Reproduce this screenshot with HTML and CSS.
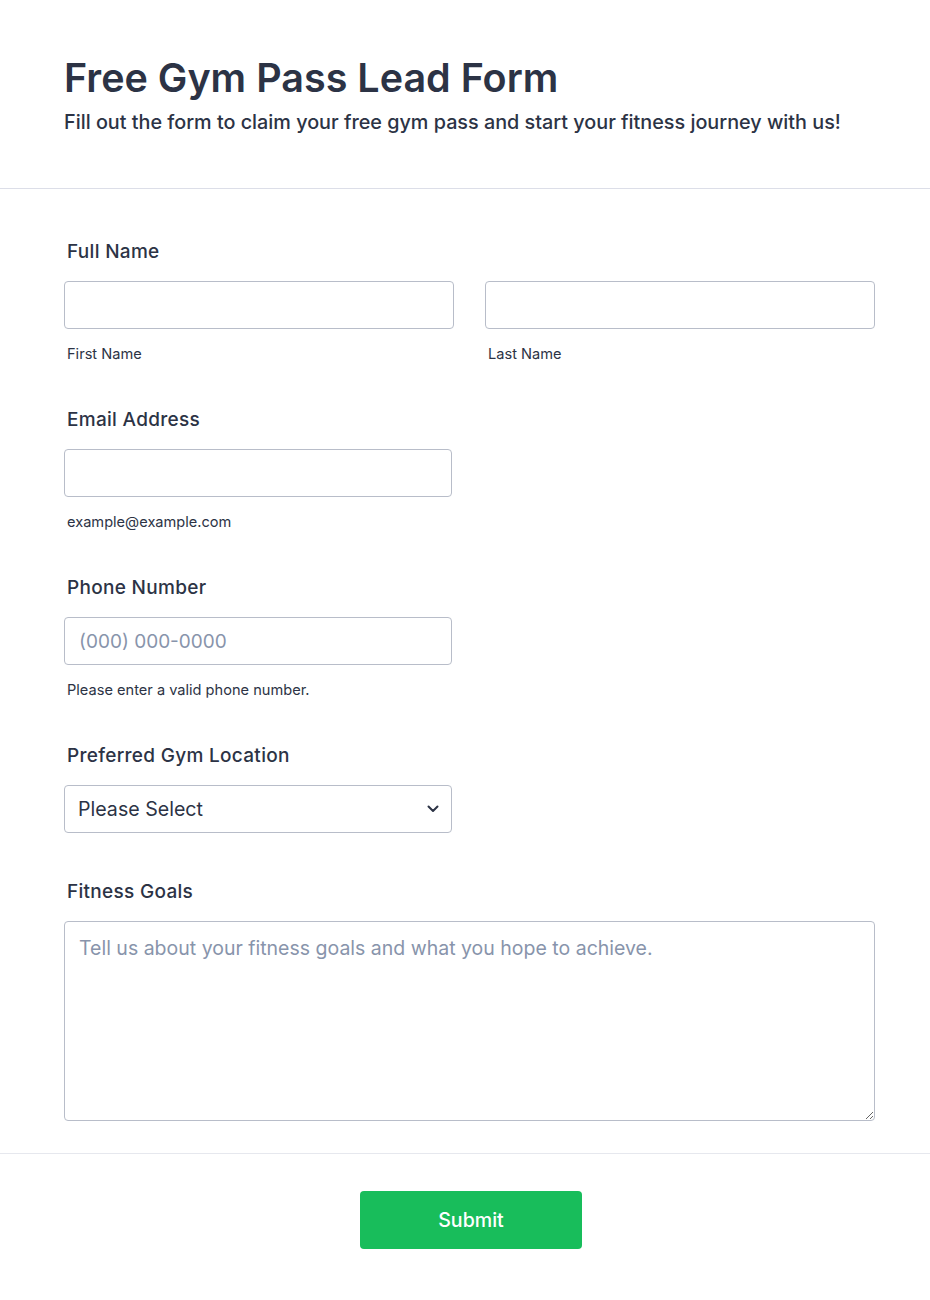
FILE: index.html
```html
<!DOCTYPE html>
<html lang="en">
<head>
<meta charset="utf-8">
<title>Free Gym Pass Lead Form</title>
<link rel="stylesheet" href="styles.css">
</head>
<body>
<form class="form">
  <header class="header">
    <h1 class="title">Free Gym Pass Lead Form</h1>
    <p class="subtitle">Fill out the form to claim your free gym pass and start your fitness journey with us!</p>
  </header>
  <div class="fields">
    <div class="field">
      <label class="label">Full Name</label>
      <div class="name-row">
        <div class="name-col">
          <input class="input" type="text">
          <span class="sublabel">First Name</span>
        </div>
        <div class="name-col">
          <input class="input" type="text">
          <span class="sublabel">Last Name</span>
        </div>
      </div>
    </div>
    <div class="field">
      <label class="label">Email Address</label>
      <input class="input input-half" type="email">
      <span class="sublabel">example@example.com</span>
    </div>
    <div class="field">
      <label class="label">Phone Number</label>
      <input class="input input-half" type="tel" placeholder="(000) 000-0000">
      <span class="sublabel">Please enter a valid phone number.</span>
    </div>
    <div class="field">
      <label class="label">Preferred Gym Location</label>
      <div class="select-wrap">
        <select class="select">
          <option>Please Select</option>
        </select>
        <svg class="chevron" width="12" height="8" viewBox="0 0 12 8"><path d="M1.5 1.5 L6 6 L10.5 1.5" fill="none" stroke="#2c3345" stroke-width="2" stroke-linecap="round" stroke-linejoin="round"/></svg>
      </div>
    </div>
    <div class="field">
      <label class="label">Fitness Goals</label>
      <textarea class="textarea" placeholder="Tell us about your fitness goals and what you hope to achieve."></textarea>
    </div>
  </div>
  <div class="footer">
    <button class="submit" type="button">Submit</button>
  </div>
</form>
</body>
</html>
```
FILE: styles.css
```css
* { box-sizing: border-box; }
html, body { margin: 0; padding: 0; background: #ffffff; }
body {
  font-family: Inter, "Noto Sans", "Liberation Sans", sans-serif;
  color: #2c3345;
}
.form { width: 930px; }
.header {
  padding: 54px 64px 54px;
  border-bottom: 1px solid #dcdee8;
}
.title {
  margin: 0;
  font-size: 39.5px;
  font-weight: 600;
  line-height: 48px;
}
.subtitle {
  margin: 8px 0 0;
  font-size: 19.8px;
  font-weight: 500;
  line-height: 24px;
}
.fields {
  padding: 50px 55px 32px 64px;
  display: flex;
  flex-direction: column;
  gap: 46px;
  border-bottom: 1px solid #e6e8ee;
}
.field { display: flex; flex-direction: column; }
.label {
  font-size: 19px;
  font-weight: 500;
  line-height: 24px;
  letter-spacing: 0.3px;
  padding-top: 1px;
  margin: 0 0 17px 3px;
}
.name-row { display: flex; gap: 31px; }
.name-col { flex: 1; display: flex; flex-direction: column; }
.input {
  height: 48px;
  width: 100%;
  border: 1px solid #b8bdc9;
  border-radius: 4px;
  padding: 0 14px;
  font-family: inherit;
  font-size: 19px;
  color: #2c3345;
  background: #fff;
  outline: none;
}
.input-half { width: 388px; }
.input::placeholder, .textarea::placeholder { color: #8894ab; }
.sublabel {
  margin: 16px 0 -2px 3px;
  font-size: 14.6px;
  line-height: 18px;
}
.select-wrap { position: relative; width: 388px; }
.select {
  appearance: none;
  -webkit-appearance: none;
  width: 100%;
  height: 48px;
  border: 1px solid #b8bdc9;
  border-radius: 4px;
  padding: 0 13px;
  font-family: inherit;
  font-size: 19.6px;
  color: #2c3345;
  background: #fff;
  outline: none;
}
.chevron { position: absolute; right: 13px; top: 20px; pointer-events: none; }
.textarea {
  width: 811px;
  height: 200px;
  border: 1px solid #b8bdc9;
  border-radius: 4px;
  padding: 13px 14px;
  font-family: inherit;
  font-size: 19.5px;
  line-height: 26px;
  color: #2c3345;
  resize: vertical;
  outline: none;
}
.footer {
  display: flex;
  justify-content: center;
  padding: 37px 0 50px 12px;
}
.submit {
  width: 222px;
  height: 58px;
  background: #18bd5b;
  border: none;
  border-radius: 4px;
  color: #fff;
  font-family: inherit;
  font-size: 19.6px;
  font-weight: 500;
}
```
